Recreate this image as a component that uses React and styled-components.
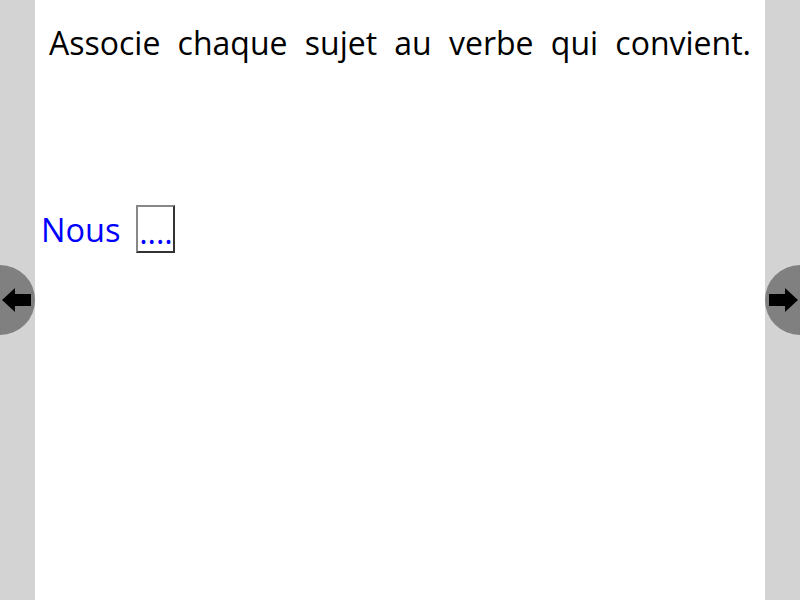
import React from 'react';
import styled, { createGlobalStyle } from 'styled-components';

const GlobalStyle = createGlobalStyle`
  html, body {
    margin: 0;
    padding: 0;
    background: #d3d3d3;
    font-family: "Open Sans", "Noto Sans", sans-serif;
  }
`;

const Screen = styled.div`
  position: relative;
  width: 800px;
  height: 600px;
  overflow: hidden;
  background: #d3d3d3;
  display: flex;
  justify-content: center;
`;

const Page = styled.div`
  width: 730px;
  height: 600px;
  background: #fff;
  box-sizing: border-box;
  padding: 20px 14px 0 6px;
`;

const Title = styled.p`
  margin: 0 0 0 8px;
  font-size: 32px;
  line-height: 46px;
  color: #000;
  text-align: justify;
  text-align-last: justify;
`;

const Row = styled.div`
  display: flex;
  align-items: center;
  gap: 16px;
  margin-top: 139px;
`;

const Subject = styled.span`
  font-size: 32.5px;
  color: #0000ff;
`;

const Slot = styled.div`
  width: 35px;
  height: 44px;
  border: 2px solid;
  border-color: #888 #333 #333 #888;
  display: flex;
  align-items: flex-end;
  justify-content: center;
  font-size: 32px;
  line-height: 38px;
  color: #0000ff;
  overflow: hidden;
`;

const NavButton = styled.div`
  position: absolute;
  top: 265px;
  ${({ side }) => (side === 'left' ? 'left: -35px;' : 'right: -35px;')}
  width: 70px;
  height: 70px;
  border-radius: 50%;
  background: #808080;
  display: flex;
  align-items: center;
  justify-content: ${({ side }) => (side === 'left' ? 'flex-end' : 'flex-start')};
  padding: 0 3px;
  box-sizing: border-box;
`;

const Arrow = ({ dir }) => (
  <svg width="30" height="24" viewBox="0 0 30 24">
    <polygon
      points="0,12 13,0 13,6 29,6 29,18 13,18 13,24"
      fill="#000"
      transform={dir === 'right' ? 'translate(30,0) scale(-1,1)' : undefined}
    />
  </svg>
);

export default function App() {
  return (
    <>
      <GlobalStyle />
      <Screen>
        <Page>
          <Title>Associe chaque sujet au verbe qui convient.</Title>
          <Row>
            <Subject>Nous</Subject>
            <Slot>....</Slot>
          </Row>
        </Page>
        <NavButton side="left">
          <Arrow dir="left" />
        </NavButton>
        <NavButton side="right">
          <Arrow dir="right" />
        </NavButton>
      </Screen>
    </>
  );
}
